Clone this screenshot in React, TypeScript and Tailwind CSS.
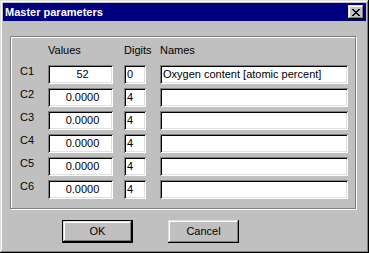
import React from "react";

const raised =
  "shadow-[inset_-1px_-1px_0_#000,inset_1px_1px_0_#dfdfdf,inset_-2px_-2px_0_#808080,inset_2px_2px_0_#fff]";
const sunken =
  "shadow-[inset_1px_1px_0_#808080,inset_-1px_-1px_0_#fff,inset_2px_2px_0_#000,inset_-2px_-2px_0_#dfdfdf]";

interface Param {
  id: string;
  value: string;
  digits: string;
  name: string;
}

const params: Param[] = [
  { id: "C1", value: "52", digits: "0", name: "Oxygen content [atomic percent]" },
  { id: "C2", value: "0.0000", digits: "4", name: "" },
  { id: "C3", value: "0.0000", digits: "4", name: "" },
  { id: "C4", value: "0.0000", digits: "4", name: "" },
  { id: "C5", value: "0.0000", digits: "4", name: "" },
  { id: "C6", value: "0.0000", digits: "4", name: "" },
];

export default function App() {
  return (
    <div
      className={`w-[369px] h-[253px] bg-[#c0c0c0] p-[3px] flex flex-col text-[11px] leading-[13px] text-black ${raised}`}
      style={{ fontFamily: '"Liberation Sans", Arial, sans-serif' }}
    >
      {/* title bar */}
      <div className="h-[18px] bg-[#000080] flex items-center justify-between pl-[2px] pr-[2px]">
        <span className="font-bold text-white text-[11px] leading-[13px]">Master parameters</span>
        <div className={`w-[16px] h-[14px] bg-[#c0c0c0] flex items-center justify-center ${raised}`}>
          <svg width="8" height="7" viewBox="0 0 8 7" shapeRendering="crispEdges">
            <path
              d="M0 0h2v1h1v1h2v-1h1v-1h2v1h-1v1h-1v1h-1v1h1v1h1v1h1v1h-2v-1h-1v-1h-2v1h-1v1h-2v-1h1v-1h1v-1h1v-1h-1v-1h-1v-1h-1z"
              fill="#000"
            />
          </svg>
        </div>
      </div>

      {/* group box */}
      <div className="ml-[7px] mr-[10px] mt-[15px] h-[173px] border border-[#808080] shadow-[inset_1px_1px_0_#fff,1px_1px_0_#fff] pt-[7px] pl-[9px]">
        <div className="flex">
          <div className="w-[28px]" />
          <div className="w-[76px]">Values</div>
          <div className="w-[36px]">Digits</div>
          <div>Names</div>
        </div>
        <div className="mt-[8px] flex flex-col gap-[4px]">
          {params.map((p) => (
            <div key={p.id} className="flex items-start h-[19px]">
              <div className="w-[28px]">{p.id}</div>
              <div className={`w-[65px] h-[19px] bg-white flex items-center justify-center pl-[4px] ${sunken}`}>
                {p.value}
              </div>
              <div className={`ml-[11px] w-[22px] h-[19px] bg-white flex items-center pl-[3px] ${sunken}`}>
                {p.digits}
              </div>
              <div className={`ml-[14px] w-[188px] h-[19px] bg-white flex items-center pl-[3px] whitespace-nowrap ${sunken}`}>
                {p.name}
              </div>
            </div>
          ))}
        </div>
      </div>

      {/* buttons */}
      <div className="mt-[11px] flex pl-[59px] gap-[35px]">
        <div className="w-[71px] h-[23px] border border-black bg-[#c0c0c0]">
          <div className={`w-full h-full flex items-center justify-center ${raised}`}>OK</div>
        </div>
        <div className={`w-[71px] h-[23px] bg-[#c0c0c0] flex items-center justify-center ${raised}`}>Cancel</div>
      </div>
    </div>
  );
}
